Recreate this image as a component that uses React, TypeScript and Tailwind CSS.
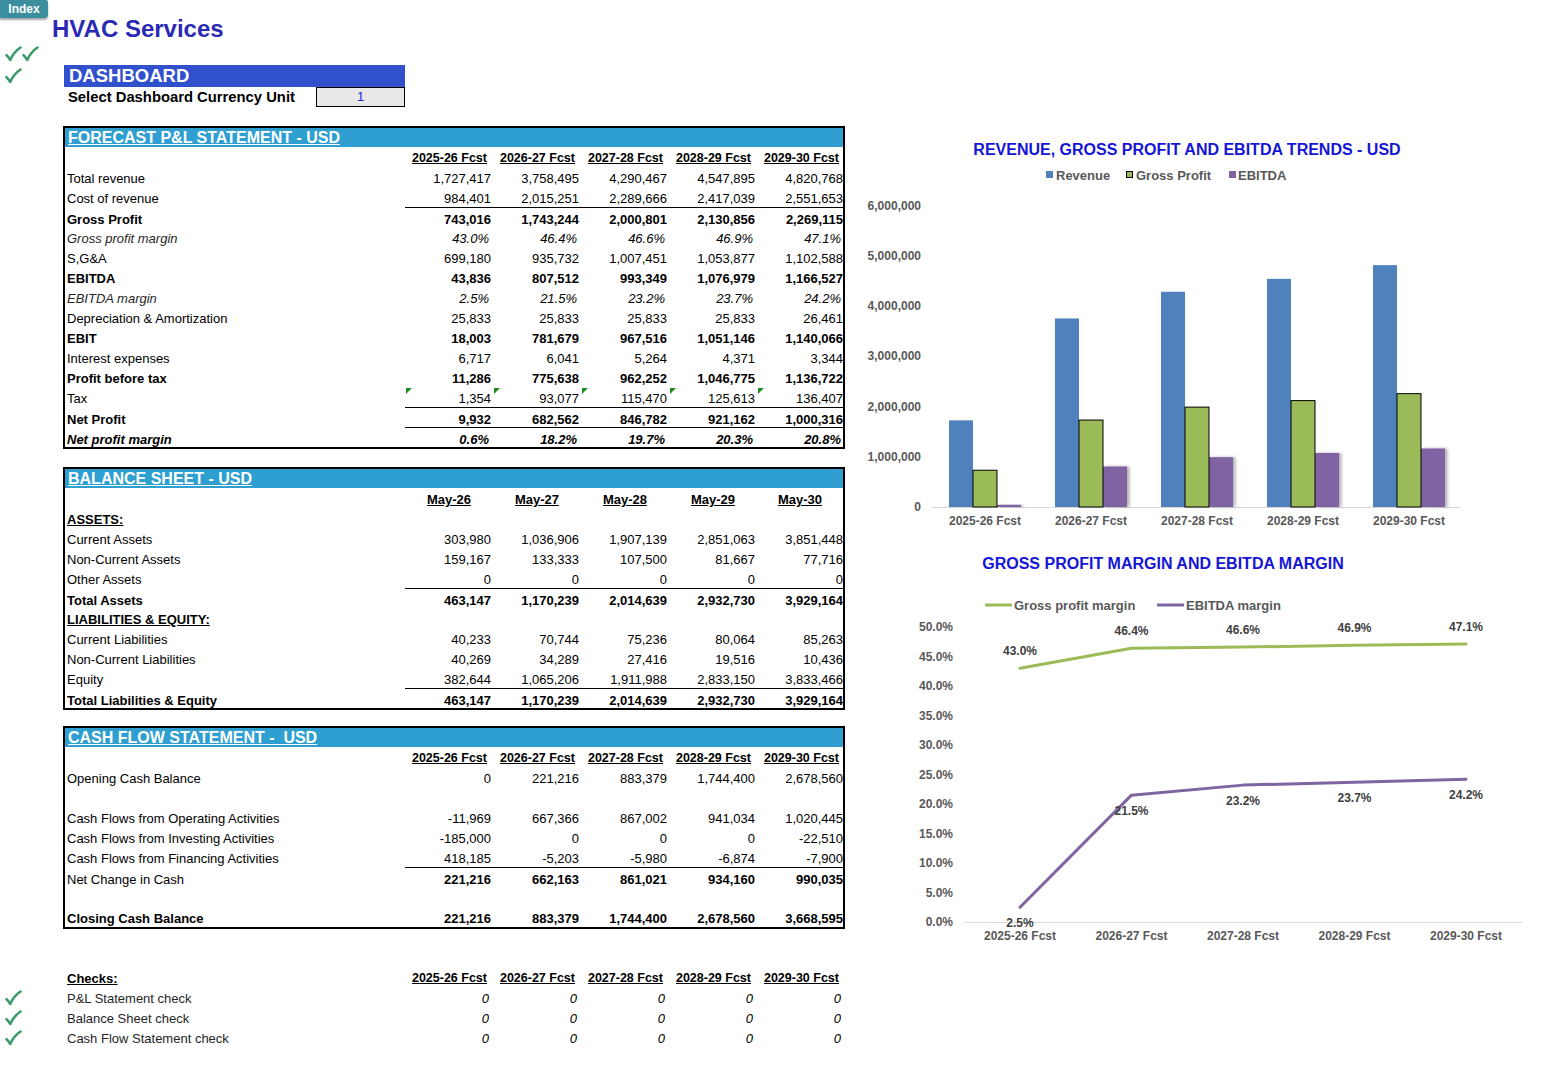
import React from "react";

type Row = {
  label: string;
  values?: string[];
  bold?: boolean;
  valuesBold?: boolean;
  italic?: boolean;
  pct?: boolean;
  line?: boolean;
  heading?: boolean;
  flag?: boolean;
};

const FCST = ["2025-26 Fcst", "2026-27 Fcst", "2027-28 Fcst", "2028-29 Fcst", "2029-30 Fcst"];
const MAY = ["May-26", "May-27", "May-28", "May-29", "May-30"];

const COLS = "grid grid-cols-[340px_88px_88px_88px_88px_86px]";

const pnl: Row[] = [
  { label: "Total revenue", values: ["1,727,417", "3,758,495", "4,290,467", "4,547,895", "4,820,768"] },
  { label: "Cost of revenue", values: ["984,401", "2,015,251", "2,289,666", "2,417,039", "2,551,653"] },
  { label: "Gross Profit", bold: true, line: true, values: ["743,016", "1,743,244", "2,000,801", "2,130,856", "2,269,115"] },
  { label: "Gross profit margin", italic: true, pct: true, values: ["43.0%", "46.4%", "46.6%", "46.9%", "47.1%"] },
  { label: "S,G&A", values: ["699,180", "935,732", "1,007,451", "1,053,877", "1,102,588"] },
  { label: "EBITDA", bold: true, values: ["43,836", "807,512", "993,349", "1,076,979", "1,166,527"] },
  { label: "EBITDA margin", italic: true, pct: true, values: ["2.5%", "21.5%", "23.2%", "23.7%", "24.2%"] },
  { label: "Depreciation & Amortization", values: ["25,833", "25,833", "25,833", "25,833", "26,461"] },
  { label: "EBIT", bold: true, values: ["18,003", "781,679", "967,516", "1,051,146", "1,140,066"] },
  { label: "Interest expenses", values: ["6,717", "6,041", "5,264", "4,371", "3,344"] },
  { label: "Profit before tax", bold: true, values: ["11,286", "775,638", "962,252", "1,046,775", "1,136,722"] },
  { label: "Tax", flag: true, values: ["1,354", "93,077", "115,470", "125,613", "136,407"] },
  { label: "Net Profit", bold: true, line: true, values: ["9,932", "682,562", "846,782", "921,162", "1,000,316"] },
  { label: "Net profit margin", bold: true, italic: true, pct: true, line: true, values: ["0.6%", "18.2%", "19.7%", "20.3%", "20.8%"] },
];

const balance: Row[] = [
  { label: "ASSETS:", heading: true },
  { label: "Current Assets", values: ["303,980", "1,036,906", "1,907,139", "2,851,063", "3,851,448"] },
  { label: "Non-Current Assets", values: ["159,167", "133,333", "107,500", "81,667", "77,716"] },
  { label: "Other Assets", values: ["0", "0", "0", "0", "0"] },
  { label: "Total Assets", bold: true, line: true, values: ["463,147", "1,170,239", "2,014,639", "2,932,730", "3,929,164"] },
  { label: "LIABILITIES & EQUITY:", heading: true },
  { label: "Current Liabilities", values: ["40,233", "70,744", "75,236", "80,064", "85,263"] },
  { label: "Non-Current Liabilities", values: ["40,269", "34,289", "27,416", "19,516", "10,436"] },
  { label: "Equity", values: ["382,644", "1,065,206", "1,911,988", "2,833,150", "3,833,466"] },
  { label: "Total Liabilities & Equity", bold: true, line: true, values: ["463,147", "1,170,239", "2,014,639", "2,932,730", "3,929,164"] },
];

const cash: Row[] = [
  { label: "Opening Cash Balance", values: ["0", "221,216", "883,379", "1,744,400", "2,678,560"] },
  { label: "" },
  { label: "Cash Flows from Operating Activities", values: ["-11,969", "667,366", "867,002", "941,034", "1,020,445"] },
  { label: "Cash Flows from Investing Activities", values: ["-185,000", "0", "0", "0", "-22,510"] },
  { label: "Cash Flows from Financing Activities", values: ["418,185", "-5,203", "-5,980", "-6,874", "-7,900"] },
  { label: "Net Change in Cash", valuesBold: true, line: true, values: ["221,216", "662,163", "861,021", "934,160", "990,035"] },
  { label: "" },
  { label: "Closing Cash Balance", bold: true, values: ["221,216", "883,379", "1,744,400", "2,678,560", "3,668,595"] },
];

const checks: Row[] = [
  { label: "P&L Statement check", italic: true, pct: true, values: ["0", "0", "0", "0", "0"] },
  { label: "Balance Sheet check", italic: true, pct: true, values: ["0", "0", "0", "0", "0"] },
  { label: "Cash Flow Statement check", italic: true, pct: true, values: ["0", "0", "0", "0", "0"] },
];

function cellPad(pct: boolean | undefined, last: boolean) {
  if (pct) return last ? "pr-[2px]" : "pr-[4px]";
  return last ? "pr-0" : "pr-[2px]";
}

// green check mark like the sheet's Wingdings tick
function Tick() {
  return (
    <svg width={17} height={16} viewBox="0 0 17 16" className="block">
      <path
        d="M1.5 9.2 C2.8 10.2 4 11.8 5.2 14 C7.6 8.8 10.8 4.6 15.5 1.5"
        fill="none"
        stroke="#3c9a6b"
        strokeWidth={2.6}
        strokeLinecap="round"
        strokeLinejoin="round"
      />
    </svg>
  );
}

function HeaderRow({ labels, centered, first }: { labels: string[]; centered?: boolean; first?: string }) {
  return (
    <div className={`${COLS} h-[20px] pt-[2px] items-center`}>
      <div className="pl-[2px] font-bold underline">{first}</div>
      {labels.map((l, i) => (
        <div
          key={l}
          className={
            centered
              ? "text-center font-bold underline text-[13px]"
              : `text-right font-bold underline text-[12.5px] ${i === 4 ? "pr-[4px]" : "pr-[6px]"}`
          }
        >
          {l}
        </div>
      ))}
    </div>
  );
}

function DataRow({ r }: { r: Row }) {
  const vb = r.bold || r.valuesBold;
  return (
    <div className={`${COLS} h-[20px] items-stretch`}>
      <div
        className={`pl-[2px] pt-[2px] flex items-center whitespace-nowrap ${r.bold || r.heading ? "font-bold" : ""} ${
          r.heading ? "underline" : ""
        } ${r.italic && !r.values?.every((v) => v === "0") ? "italic" : ""} ${r.italic && !r.bold ? "text-[#262626]" : ""}`}
      >
        {r.label}
      </div>
      {r.values?.map((v, i) => (
        <div
          key={i}
          className={`relative pt-[2px] flex items-center justify-end ${cellPad(r.pct, i === 4)} ${
            r.line ? "border-t border-black" : ""
          } ${vb ? "font-bold" : ""} ${r.italic ? "italic" : ""}`}
        >
          {r.flag && (
            <span className="absolute top-[1px] left-[1px] w-0 h-0 border-t-[6px] border-r-[6px] border-t-[#1f8a1f] border-r-transparent" />
          )}
          {v}
        </div>
      ))}
    </div>
  );
}

function Section({ title, children, className = "" }: { title: string; children: React.ReactNode; className?: string }) {
  return (
    <div className={`ml-[63px] w-[782px] border-2 border-black ${className}`}>
      <div className="h-[19px] bg-[#2e9fd0] pl-[3px] flex items-center">
        <span className="text-white font-bold text-[16px] underline leading-none whitespace-pre">{title}</span>
      </div>
      {children}
    </div>
  );
}

const revenue = [1727417, 3758495, 4290467, 4547895, 4820768];
const gp = [743016, 1743244, 2000801, 2130856, 2269115];
const ebitda = [43836, 807512, 993349, 1076979, 1166527];

function BarChart() {
  const base = 377;
  const s = 50.17 / 1e6;
  const cx = [125, 231, 337, 443, 549];
  const ylabels = ["0", "1,000,000", "2,000,000", "3,000,000", "4,000,000", "5,000,000", "6,000,000"];
  return (
    <svg width={688} height={410} className="block">
      <defs>
        <filter id="sh" x="-20%" y="-5%" width="160%" height="110%">
          <feDropShadow dx="2.5" dy="0" stdDeviation="1.5" floodColor="#000" floodOpacity="0.3" />
        </filter>
      </defs>
      <text x={327} y={25} textAnchor="middle" fontSize={16} fontWeight="bold" fill="#1515d5">
        REVENUE, GROSS PROFIT AND EBITDA TRENDS - USD
      </text>
      <rect x={186} y={41} width={7} height={7} fill="#4f81bd" />
      <text x={196} y={50} fontSize={13} fontWeight="bold" fill="#595959">Revenue</text>
      <rect x={266.5} y={41.5} width={6} height={6} fill="#9bbb59" stroke="#000" />
      <text x={276} y={50} fontSize={13} fontWeight="bold" fill="#595959">Gross Profit</text>
      <rect x={369} y={41} width={7} height={7} fill="#8064a2" />
      <text x={378} y={50} fontSize={13} fontWeight="bold" fill="#595959">EBITDA</text>
      {ylabels.map((l, k) => (
        <text key={l} x={61} y={base - k * 50.17 + 4} textAnchor="end" fontSize={12} fontWeight="bold" fill="#595959">
          {l}
        </text>
      ))}
      <line x1={71} x2={601} y1={base + 0.5} y2={base + 0.5} stroke="#d9d9d9" />
      {cx.map((c, i) => {
        const hr = revenue[i] * s;
        const hg = gp[i] * s;
        const he = ebitda[i] * s;
        return (
          <g key={c}>
            <rect x={c + 12} y={base - he} width={24} height={he} fill="#8064a2" filter="url(#sh)" />
            <rect x={c - 36} y={base - hr} width={24} height={hr} fill="#4f81bd" />
            <rect x={c - 12} y={base - hg + 0.5} width={24} height={hg - 0.5} fill="#9bbb59" stroke="#000" strokeWidth={1} />
            <text x={c} y={395} textAnchor="middle" fontSize={12} fontWeight="bold" fill="#595959">
              {FCST[i]}
            </text>
          </g>
        );
      })}
    </svg>
  );
}

function LineChart() {
  const y0 = 382;
  const k = 5.9;
  const cx = [160, 271.5, 383, 494.5, 606];
  const gpm = [43.0, 46.4, 46.6, 46.9, 47.1];
  const em = [2.5, 21.5, 23.2, 23.7, 24.2];
  const yl = ["0.0%", "5.0%", "10.0%", "15.0%", "20.0%", "25.0%", "30.0%", "35.0%", "40.0%", "45.0%", "50.0%"];
  const pts = (arr: number[]) => arr.map((v, i) => `${cx[i]},${y0 - v * k}`).join(" ");
  return (
    <svg width={688} height={420} className="block">
      <text x={303} y={29} textAnchor="middle" fontSize={16} fontWeight="bold" fill="#1515d5">
        GROSS PROFIT MARGIN AND EBITDA MARGIN
      </text>
      <line x1={125} x2={152} y1={65} y2={65} stroke="#9bbb59" strokeWidth={3} />
      <text x={154} y={70} fontSize={13} fontWeight="bold" fill="#595959">Gross profit margin</text>
      <line x1={297} x2={324} y1={65} y2={65} stroke="#8064a2" strokeWidth={3} />
      <text x={326} y={70} fontSize={13} fontWeight="bold" fill="#595959">EBITDA margin</text>
      {yl.map((l, i) => (
        <text key={l} x={93} y={y0 - i * 29.5 + 4} textAnchor="end" fontSize={12} fontWeight="bold" fill="#595959">
          {l}
        </text>
      ))}
      <line x1={105} x2={662} y1={y0 + 0.5} y2={y0 + 0.5} stroke="#d9d9d9" />
      <polyline points={pts(gpm)} fill="none" stroke="#9bbb59" strokeWidth={3} strokeLinejoin="round" strokeLinecap="round" />
      <polyline points={pts(em)} fill="none" stroke="#8064a2" strokeWidth={3} strokeLinejoin="round" strokeLinecap="round" />
      {cx.map((c, i) => (
        <g key={c}>
          <text x={c} y={y0 - gpm[i] * k - 13} textAnchor="middle" fontSize={12} fontWeight="bold" fill="#404040">
            {gpm[i].toFixed(1)}%
          </text>
          <text x={c} y={y0 - em[i] * k + 20} textAnchor="middle" fontSize={12} fontWeight="bold" fill="#404040">
            {em[i].toFixed(1)}%
          </text>
          <text x={c} y={400} textAnchor="middle" fontSize={12} fontWeight="bold" fill="#595959">
            {FCST[i]}
          </text>
        </g>
      ))}
    </svg>
  );
}

export default function App() {
  return (
    <div className="w-[1548px] min-h-screen bg-white flex font-['Liberation_Sans',Arial,sans-serif] text-[13px] text-black">
      {/* left: dashboard tables */}
      <div className="w-[860px] shrink-0">
        <div className="w-[48px] h-[18px] bg-[#3b8e9e] rounded-br-[4px] rounded-tr-[2px] shadow-[0_2px_2px_rgba(0,0,0,0.35)] text-white font-bold text-[12px] leading-[18px] text-center">
          Index
        </div>
        <div className="pl-[52px] h-[22px] leading-[22px] text-[24px] font-bold text-[#2a2ab4]">HVAC Services</div>

        <div className="flex h-[67px]">
          <div className="w-[64px] pl-[5px] pt-[6px] flex flex-col gap-[5px]">
            <div className="h-[17px] flex">
              <Tick />
              <Tick />
            </div>
            <div className="h-[17px] flex">
              <Tick />
            </div>
          </div>
          <div className="w-[341px] pt-[25px]">
            <div className="h-[22px] bg-[#3050cc] text-white font-bold text-[18.5px] leading-[22px] pl-[5px]">DASHBOARD</div>
            <div className="flex h-[20px] items-center">
              <div className="flex-1 pl-[4px] pt-[1px] font-bold text-[14.8px]">Select Dashboard Currency Unit</div>
              <div className="w-[89px] h-[20px] border border-black bg-[#e8e8e8] text-center text-[#1f1fd0] leading-[18px]">1</div>
            </div>
          </div>
        </div>

        <Section title="FORECAST P&L STATEMENT - USD" className="mt-[19px]">
          <HeaderRow labels={FCST} />
          {pnl.map((r) => (
            <DataRow key={r.label} r={r} />
          ))}
        </Section>

        <Section title="BALANCE SHEET - USD" className="mt-[18px]">
          <HeaderRow labels={MAY} centered />
          {balance.map((r) => (
            <DataRow key={r.label} r={r} />
          ))}
        </Section>

        <Section title="CASH FLOW STATEMENT -  USD" className="mt-[16px]">
          <HeaderRow labels={FCST} />
          {cash.map((r, i) => (
            <DataRow key={i} r={r} />
          ))}
        </Section>

        <div className="mt-[38px] flex">
          <div className="w-[65px] pl-[5px] pt-[20px] flex flex-col">
            {checks.map((c) => (
              <div key={c.label} className="h-[20px] pt-[2px] flex items-center">
                <Tick />
              </div>
            ))}
          </div>
          <div className="w-[778px]">
            <HeaderRow labels={FCST} first="Checks:" />
            {checks.map((r) => (
              <DataRow key={r.label} r={r} />
            ))}
          </div>
        </div>
      </div>

      {/* right: charts */}
      <div className="pt-[130px] flex flex-col">
        <BarChart />
        <LineChart />
      </div>
    </div>
  );
}
